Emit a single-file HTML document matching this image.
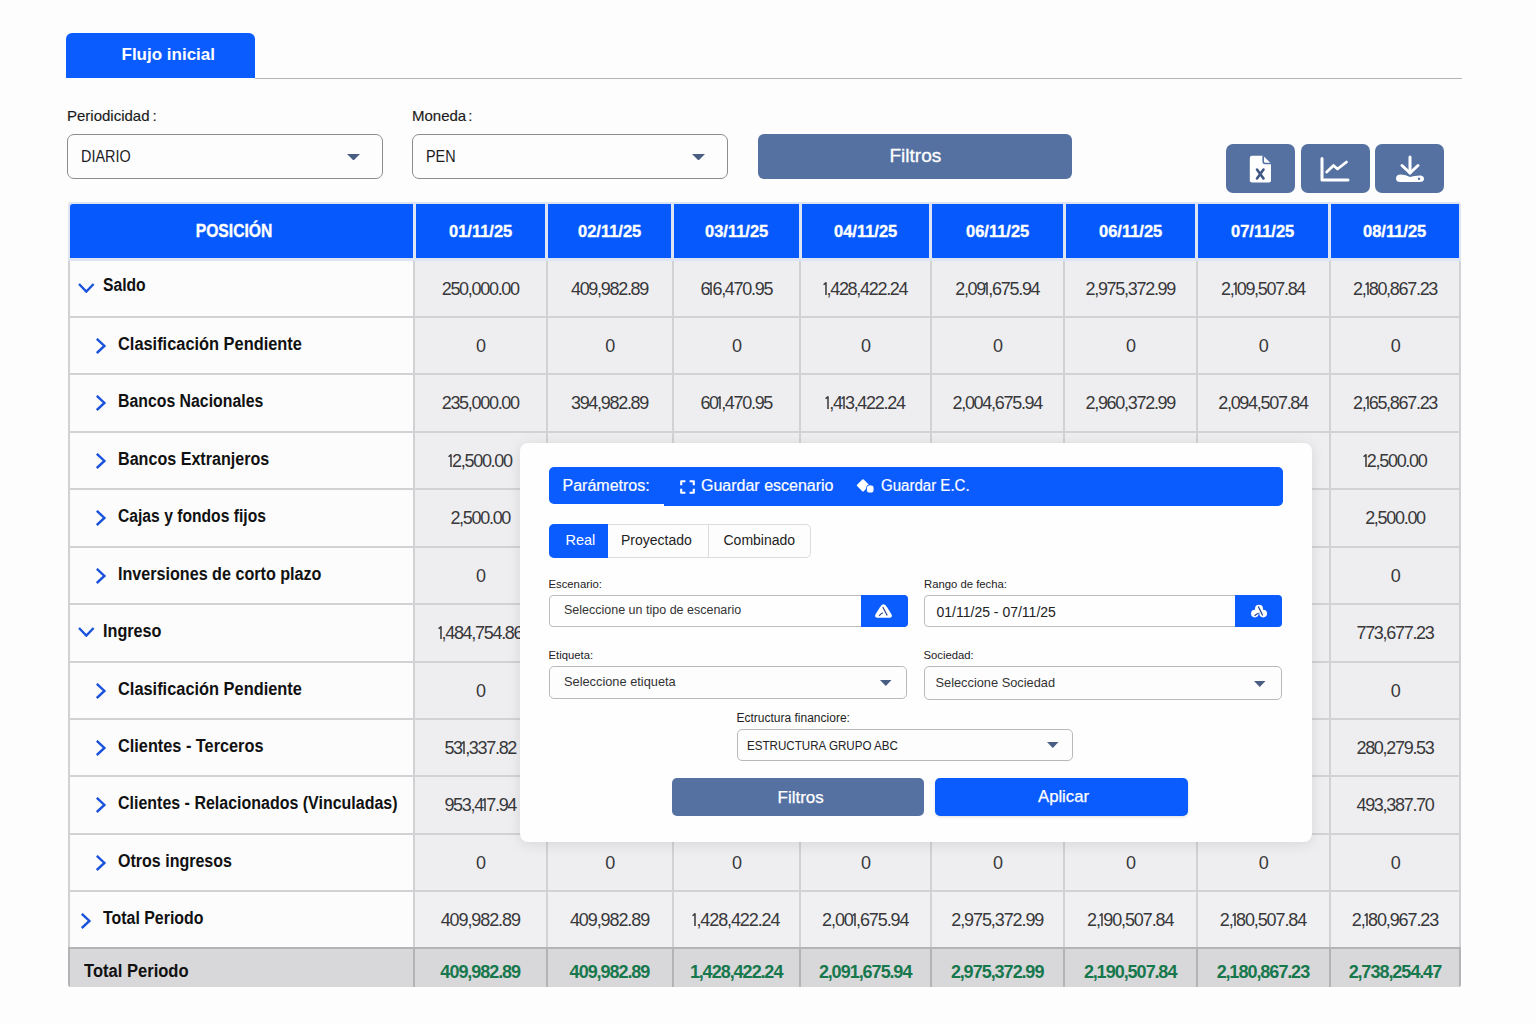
<!DOCTYPE html>
<html><head><meta charset="utf-8"><style>
*{box-sizing:border-box;margin:0;padding:0}
html,body{width:1536px;height:1024px;overflow:hidden;background:#fdfdfd;font-family:"Liberation Sans",sans-serif;color:#1c1c1e}
.a{position:absolute}
.t{position:absolute;white-space:nowrap;line-height:1}
.sx{display:inline-block;transform-origin:0 0}
.c{position:absolute;white-space:nowrap;line-height:1;text-align:center}
.c span{display:inline-block}
.n1{vertical-align:baseline;margin:0 -0.6px 0 -0.7px}
.pb{font-style:normal;margin:0 -0.3px}
</style></head><body>

<div class="a" style="left:66px;top:33px;width:189px;height:45px;background:#0b5cff;border-radius:6px 6px 0 0"></div>
<div class="t" style="left:121.5px;top:46px;font-size:17px;font-weight:700;color:#fff">Flujo inicial</div>
<div class="a" style="left:255px;top:78px;width:1207px;height:1px;background:#b4b4b6"></div>
<div class="t" style="left:67px;top:108px;font-size:15px;color:#1a1a1a;-webkit-text-stroke:0.15px #1a1a1a">Periodicidad<span style="margin-left:3px">:</span></div>
<div class="t" style="left:412px;top:108px;font-size:15px;color:#1a1a1a;-webkit-text-stroke:0.15px #1a1a1a">Moneda<span style="margin-left:2px">:</span></div>
<div class="a" style="left:67px;top:134px;width:316px;height:44.5px;border:1.5px solid #8c8c8e;border-radius:7px;background:#fdfdfe"></div>
<div class="t" style="left:81px;top:149px;font-size:16px;color:#1c1c1e"><span class='sx' style='transform:scaleX(0.9)'>DIARIO</span></div>
<svg class="a" style="left:347px;top:153.5px" width="13" height="6.5" viewBox="0 0 13 6.5"><path d="M0 0H13L6.5 6.5Z" fill="#4a5d82"/></svg>
<div class="a" style="left:412px;top:134px;width:316px;height:44.5px;border:1.5px solid #8c8c8e;border-radius:7px;background:#fdfdfe"></div>
<div class="t" style="left:425.5px;top:149px;font-size:16px;color:#1c1c1e"><span class='sx' style='transform:scaleX(0.9)'>PEN</span></div>
<svg class="a" style="left:692px;top:153.5px" width="13" height="6.5" viewBox="0 0 13 6.5"><path d="M0 0H13L6.5 6.5Z" fill="#4a5d82"/></svg>
<div class="a" style="left:758px;top:134px;width:314px;height:44.5px;background:#5571a1;border-radius:6px"></div>
<div class="t" style="left:889.5px;top:145.5px;font-size:19px;color:#fff;-webkit-text-stroke:0.3px #fff">Filtros</div>
<div class="a" style="left:1226px;top:143.5px;width:69px;height:49.5px;background:#5571a1;border-radius:7px"></div>
<div class="a" style="left:1300.5px;top:143.5px;width:69px;height:49.5px;background:#5571a1;border-radius:7px"></div>
<div class="a" style="left:1375px;top:143.5px;width:69px;height:49.5px;background:#5571a1;border-radius:7px"></div>
<svg class="a" style="left:1249px;top:155px" width="23" height="29" viewBox="0 0 23 29">
<path d="M3 0.7H14.2L22 8.5V25.5Q22 27.6 19.9 27.6H3Q0.8 27.6 0.8 25.5V2.9Q0.8 0.7 3 0.7Z" fill="#fff"/>
<path d="M14.2 0.7V6.5Q14.2 8.5 16.2 8.5H22" fill="none" stroke="#5571a1" stroke-width="1.6"/>
<path d="M8 14.5L14.5 23.5M14.5 14.5L8 23.5" stroke="#3f5784" stroke-width="2.6" stroke-linecap="round"/>
</svg>
<svg class="a" style="left:1318px;top:155px" width="34" height="28" viewBox="0 0 34 28">
<path d="M4 3.5V25H30" fill="none" stroke="#fff" stroke-width="3" stroke-linecap="round" stroke-linejoin="round"/>
<path d="M8.7 17L15.5 10.5L19.5 14L28.5 7" fill="none" stroke="#fff" stroke-width="2.8" stroke-linecap="round" stroke-linejoin="round"/>
</svg>
<svg class="a" style="left:1394px;top:154px" width="32" height="30" viewBox="0 0 32 30">
<path d="M16 3V19" stroke="#fff" stroke-width="3" stroke-linecap="round"/>
<path d="M8 11.5L16 19L24 11.5" fill="none" stroke="#fff" stroke-width="3" stroke-linecap="round" stroke-linejoin="round"/>
<path d="M7 20.5Q2 20.5 2 24.5Q2 28 6.5 28H25.5Q30 28 30 25Q30 21.8 26 21.5Q20 21.5 16 23Q12 20.5 7 20.5Z" fill="#fff"/>
<circle cx="25" cy="24.8" r="1.2" fill="#5571a1"/>
</svg>
<div class="a" style="left:67.5px;top:202px;width:1393.0px;height:784.5px;background:#d2d2d5;overflow:hidden;border-radius:4px 4px 3px 3px">
<div class="a" style="left:0.5px;top:0px;width:1392.5px;height:58.5px;background:#dde4f3;"></div>
<div class="a" style="left:2.0px;top:2px;width:343.0px;height:54.19999999999999px;background:#0659fc;border-radius:3px 0 0 0"></div>
<div class="a" style="left:348.0px;top:2px;width:129.5px;height:54.19999999999999px;background:#0659fc;"></div>
<div class="a" style="left:480.5px;top:2px;width:123.0px;height:54.19999999999999px;background:#0659fc;"></div>
<div class="a" style="left:606.5px;top:2px;width:124.5px;height:54.19999999999999px;background:#0659fc;"></div>
<div class="a" style="left:734.0px;top:2px;width:127.5px;height:54.19999999999999px;background:#0659fc;"></div>
<div class="a" style="left:864.5px;top:2px;width:130.5px;height:54.19999999999999px;background:#0659fc;"></div>
<div class="a" style="left:998.0px;top:2px;width:129.5px;height:54.19999999999999px;background:#0659fc;"></div>
<div class="a" style="left:1130.5px;top:2px;width:130.0px;height:54.19999999999999px;background:#0659fc;"></div>
<div class="a" style="left:1263.5px;top:2px;width:127.5px;height:54.19999999999999px;background:#0659fc;"></div>
<div class="a" style="left:2.0px;top:58.5px;width:343.5px;height:55.5px;background:#fcfcfd;"></div>
<div class="a" style="left:347.5px;top:58.5px;width:130.5px;height:55.5px;background:#eeeef0;"></div>
<div class="a" style="left:480.0px;top:58.5px;width:124.0px;height:55.5px;background:#eeeef0;"></div>
<div class="a" style="left:606.0px;top:58.5px;width:125.5px;height:55.5px;background:#eeeef0;"></div>
<div class="a" style="left:733.5px;top:58.5px;width:128.5px;height:55.5px;background:#eeeef0;"></div>
<div class="a" style="left:864.0px;top:58.5px;width:131.5px;height:55.5px;background:#eeeef0;"></div>
<div class="a" style="left:997.5px;top:58.5px;width:130.5px;height:55.5px;background:#eeeef0;"></div>
<div class="a" style="left:1130.0px;top:58.5px;width:131.0px;height:55.5px;background:#eeeef0;"></div>
<div class="a" style="left:1263.0px;top:58.5px;width:128.5px;height:55.5px;background:#eeeef0;"></div>
<div class="a" style="left:2.0px;top:116px;width:343.5px;height:55px;background:#fcfcfd;"></div>
<div class="a" style="left:347.5px;top:116px;width:130.5px;height:55px;background:#eeeef0;"></div>
<div class="a" style="left:480.0px;top:116px;width:124.0px;height:55px;background:#eeeef0;"></div>
<div class="a" style="left:606.0px;top:116px;width:125.5px;height:55px;background:#eeeef0;"></div>
<div class="a" style="left:733.5px;top:116px;width:128.5px;height:55px;background:#eeeef0;"></div>
<div class="a" style="left:864.0px;top:116px;width:131.5px;height:55px;background:#eeeef0;"></div>
<div class="a" style="left:997.5px;top:116px;width:130.5px;height:55px;background:#eeeef0;"></div>
<div class="a" style="left:1130.0px;top:116px;width:131.0px;height:55px;background:#eeeef0;"></div>
<div class="a" style="left:1263.0px;top:116px;width:128.5px;height:55px;background:#eeeef0;"></div>
<div class="a" style="left:2.0px;top:173px;width:343.5px;height:56px;background:#fcfcfd;"></div>
<div class="a" style="left:347.5px;top:173px;width:130.5px;height:56px;background:#eeeef0;"></div>
<div class="a" style="left:480.0px;top:173px;width:124.0px;height:56px;background:#eeeef0;"></div>
<div class="a" style="left:606.0px;top:173px;width:125.5px;height:56px;background:#eeeef0;"></div>
<div class="a" style="left:733.5px;top:173px;width:128.5px;height:56px;background:#eeeef0;"></div>
<div class="a" style="left:864.0px;top:173px;width:131.5px;height:56px;background:#eeeef0;"></div>
<div class="a" style="left:997.5px;top:173px;width:130.5px;height:56px;background:#eeeef0;"></div>
<div class="a" style="left:1130.0px;top:173px;width:131.0px;height:56px;background:#eeeef0;"></div>
<div class="a" style="left:1263.0px;top:173px;width:128.5px;height:56px;background:#eeeef0;"></div>
<div class="a" style="left:2.0px;top:231px;width:343.5px;height:55px;background:#fcfcfd;"></div>
<div class="a" style="left:347.5px;top:231px;width:130.5px;height:55px;background:#eeeef0;"></div>
<div class="a" style="left:480.0px;top:231px;width:124.0px;height:55px;background:#eeeef0;"></div>
<div class="a" style="left:606.0px;top:231px;width:125.5px;height:55px;background:#eeeef0;"></div>
<div class="a" style="left:733.5px;top:231px;width:128.5px;height:55px;background:#eeeef0;"></div>
<div class="a" style="left:864.0px;top:231px;width:131.5px;height:55px;background:#eeeef0;"></div>
<div class="a" style="left:997.5px;top:231px;width:130.5px;height:55px;background:#eeeef0;"></div>
<div class="a" style="left:1130.0px;top:231px;width:131.0px;height:55px;background:#eeeef0;"></div>
<div class="a" style="left:1263.0px;top:231px;width:128.5px;height:55px;background:#eeeef0;"></div>
<div class="a" style="left:2.0px;top:288px;width:343.5px;height:56px;background:#fcfcfd;"></div>
<div class="a" style="left:347.5px;top:288px;width:130.5px;height:56px;background:#eeeef0;"></div>
<div class="a" style="left:480.0px;top:288px;width:124.0px;height:56px;background:#eeeef0;"></div>
<div class="a" style="left:606.0px;top:288px;width:125.5px;height:56px;background:#eeeef0;"></div>
<div class="a" style="left:733.5px;top:288px;width:128.5px;height:56px;background:#eeeef0;"></div>
<div class="a" style="left:864.0px;top:288px;width:131.5px;height:56px;background:#eeeef0;"></div>
<div class="a" style="left:997.5px;top:288px;width:130.5px;height:56px;background:#eeeef0;"></div>
<div class="a" style="left:1130.0px;top:288px;width:131.0px;height:56px;background:#eeeef0;"></div>
<div class="a" style="left:1263.0px;top:288px;width:128.5px;height:56px;background:#eeeef0;"></div>
<div class="a" style="left:2.0px;top:346px;width:343.5px;height:55px;background:#fcfcfd;"></div>
<div class="a" style="left:347.5px;top:346px;width:130.5px;height:55px;background:#eeeef0;"></div>
<div class="a" style="left:480.0px;top:346px;width:124.0px;height:55px;background:#eeeef0;"></div>
<div class="a" style="left:606.0px;top:346px;width:125.5px;height:55px;background:#eeeef0;"></div>
<div class="a" style="left:733.5px;top:346px;width:128.5px;height:55px;background:#eeeef0;"></div>
<div class="a" style="left:864.0px;top:346px;width:131.5px;height:55px;background:#eeeef0;"></div>
<div class="a" style="left:997.5px;top:346px;width:130.5px;height:55px;background:#eeeef0;"></div>
<div class="a" style="left:1130.0px;top:346px;width:131.0px;height:55px;background:#eeeef0;"></div>
<div class="a" style="left:1263.0px;top:346px;width:128.5px;height:55px;background:#eeeef0;"></div>
<div class="a" style="left:2.0px;top:403px;width:343.5px;height:56px;background:#fcfcfd;"></div>
<div class="a" style="left:347.5px;top:403px;width:130.5px;height:56px;background:#eeeef0;"></div>
<div class="a" style="left:480.0px;top:403px;width:124.0px;height:56px;background:#eeeef0;"></div>
<div class="a" style="left:606.0px;top:403px;width:125.5px;height:56px;background:#eeeef0;"></div>
<div class="a" style="left:733.5px;top:403px;width:128.5px;height:56px;background:#eeeef0;"></div>
<div class="a" style="left:864.0px;top:403px;width:131.5px;height:56px;background:#eeeef0;"></div>
<div class="a" style="left:997.5px;top:403px;width:130.5px;height:56px;background:#eeeef0;"></div>
<div class="a" style="left:1130.0px;top:403px;width:131.0px;height:56px;background:#eeeef0;"></div>
<div class="a" style="left:1263.0px;top:403px;width:128.5px;height:56px;background:#eeeef0;"></div>
<div class="a" style="left:2.0px;top:461px;width:343.5px;height:55px;background:#fcfcfd;"></div>
<div class="a" style="left:347.5px;top:461px;width:130.5px;height:55px;background:#eeeef0;"></div>
<div class="a" style="left:480.0px;top:461px;width:124.0px;height:55px;background:#eeeef0;"></div>
<div class="a" style="left:606.0px;top:461px;width:125.5px;height:55px;background:#eeeef0;"></div>
<div class="a" style="left:733.5px;top:461px;width:128.5px;height:55px;background:#eeeef0;"></div>
<div class="a" style="left:864.0px;top:461px;width:131.5px;height:55px;background:#eeeef0;"></div>
<div class="a" style="left:997.5px;top:461px;width:130.5px;height:55px;background:#eeeef0;"></div>
<div class="a" style="left:1130.0px;top:461px;width:131.0px;height:55px;background:#eeeef0;"></div>
<div class="a" style="left:1263.0px;top:461px;width:128.5px;height:55px;background:#eeeef0;"></div>
<div class="a" style="left:2.0px;top:518px;width:343.5px;height:55px;background:#fcfcfd;"></div>
<div class="a" style="left:347.5px;top:518px;width:130.5px;height:55px;background:#eeeef0;"></div>
<div class="a" style="left:480.0px;top:518px;width:124.0px;height:55px;background:#eeeef0;"></div>
<div class="a" style="left:606.0px;top:518px;width:125.5px;height:55px;background:#eeeef0;"></div>
<div class="a" style="left:733.5px;top:518px;width:128.5px;height:55px;background:#eeeef0;"></div>
<div class="a" style="left:864.0px;top:518px;width:131.5px;height:55px;background:#eeeef0;"></div>
<div class="a" style="left:997.5px;top:518px;width:130.5px;height:55px;background:#eeeef0;"></div>
<div class="a" style="left:1130.0px;top:518px;width:131.0px;height:55px;background:#eeeef0;"></div>
<div class="a" style="left:1263.0px;top:518px;width:128.5px;height:55px;background:#eeeef0;"></div>
<div class="a" style="left:2.0px;top:575px;width:343.5px;height:56px;background:#fcfcfd;"></div>
<div class="a" style="left:347.5px;top:575px;width:130.5px;height:56px;background:#eeeef0;"></div>
<div class="a" style="left:480.0px;top:575px;width:124.0px;height:56px;background:#eeeef0;"></div>
<div class="a" style="left:606.0px;top:575px;width:125.5px;height:56px;background:#eeeef0;"></div>
<div class="a" style="left:733.5px;top:575px;width:128.5px;height:56px;background:#eeeef0;"></div>
<div class="a" style="left:864.0px;top:575px;width:131.5px;height:56px;background:#eeeef0;"></div>
<div class="a" style="left:997.5px;top:575px;width:130.5px;height:56px;background:#eeeef0;"></div>
<div class="a" style="left:1130.0px;top:575px;width:131.0px;height:56px;background:#eeeef0;"></div>
<div class="a" style="left:1263.0px;top:575px;width:128.5px;height:56px;background:#eeeef0;"></div>
<div class="a" style="left:2.0px;top:633px;width:343.5px;height:55px;background:#fcfcfd;"></div>
<div class="a" style="left:347.5px;top:633px;width:130.5px;height:55px;background:#eeeef0;"></div>
<div class="a" style="left:480.0px;top:633px;width:124.0px;height:55px;background:#eeeef0;"></div>
<div class="a" style="left:606.0px;top:633px;width:125.5px;height:55px;background:#eeeef0;"></div>
<div class="a" style="left:733.5px;top:633px;width:128.5px;height:55px;background:#eeeef0;"></div>
<div class="a" style="left:864.0px;top:633px;width:131.5px;height:55px;background:#eeeef0;"></div>
<div class="a" style="left:997.5px;top:633px;width:130.5px;height:55px;background:#eeeef0;"></div>
<div class="a" style="left:1130.0px;top:633px;width:131.0px;height:55px;background:#eeeef0;"></div>
<div class="a" style="left:1263.0px;top:633px;width:128.5px;height:55px;background:#eeeef0;"></div>
<div class="a" style="left:2.0px;top:690px;width:343.5px;height:55px;background:#fcfcfd;"></div>
<div class="a" style="left:347.5px;top:690px;width:130.5px;height:55px;background:#f0f0f2;"></div>
<div class="a" style="left:480.0px;top:690px;width:124.0px;height:55px;background:#f0f0f2;"></div>
<div class="a" style="left:606.0px;top:690px;width:125.5px;height:55px;background:#f0f0f2;"></div>
<div class="a" style="left:733.5px;top:690px;width:128.5px;height:55px;background:#f0f0f2;"></div>
<div class="a" style="left:864.0px;top:690px;width:131.5px;height:55px;background:#f0f0f2;"></div>
<div class="a" style="left:997.5px;top:690px;width:130.5px;height:55px;background:#f0f0f2;"></div>
<div class="a" style="left:1130.0px;top:690px;width:131.0px;height:55px;background:#f0f0f2;"></div>
<div class="a" style="left:1263.0px;top:690px;width:128.5px;height:55px;background:#f0f0f2;"></div>
<div class="a" style="left:0.5px;top:745px;width:1392.5px;height:44.5px;background:#b4b4b7;"></div>
<div class="a" style="left:2.0px;top:747.2px;width:343.5px;height:42.299999999999955px;background:#d8d7d9;"></div>
<div class="a" style="left:347.5px;top:747.2px;width:130.5px;height:42.299999999999955px;background:#d8d7d9;"></div>
<div class="a" style="left:480.0px;top:747.2px;width:124.0px;height:42.299999999999955px;background:#d8d7d9;"></div>
<div class="a" style="left:606.0px;top:747.2px;width:125.5px;height:42.299999999999955px;background:#d8d7d9;"></div>
<div class="a" style="left:733.5px;top:747.2px;width:128.5px;height:42.299999999999955px;background:#d8d7d9;"></div>
<div class="a" style="left:864.0px;top:747.2px;width:131.5px;height:42.299999999999955px;background:#d8d7d9;"></div>
<div class="a" style="left:997.5px;top:747.2px;width:130.5px;height:42.299999999999955px;background:#d8d7d9;"></div>
<div class="a" style="left:1130.0px;top:747.2px;width:131.0px;height:42.299999999999955px;background:#d8d7d9;"></div>
<div class="a" style="left:1263.0px;top:747.2px;width:128.0px;height:42.299999999999955px;background:#d8d7d9;"></div>
</div>
<div class="c" style="left:61px;width:346px;top:222px;font-size:18px;font-weight:700;color:#fff;-webkit-text-stroke:0.35px #fff"><span style="transform:scaleX(0.87)">POSICIÓN</span></div>
<div class="c" style="left:414px;width:132.5px;top:223px;font-size:17px;font-weight:700;color:#fff;-webkit-text-stroke:0.35px #fff"><span style="transform:scaleX(0.97)">01/11/25</span></div>
<div class="c" style="left:546.5px;width:126.0px;top:223px;font-size:17px;font-weight:700;color:#fff;-webkit-text-stroke:0.35px #fff"><span style="transform:scaleX(0.97)">02/11/25</span></div>
<div class="c" style="left:672.5px;width:127.5px;top:223px;font-size:17px;font-weight:700;color:#fff;-webkit-text-stroke:0.35px #fff"><span style="transform:scaleX(0.97)">03/11/25</span></div>
<div class="c" style="left:800px;width:130.5px;top:223px;font-size:17px;font-weight:700;color:#fff;-webkit-text-stroke:0.35px #fff"><span style="transform:scaleX(0.97)">04/11/25</span></div>
<div class="c" style="left:930.5px;width:133.5px;top:223px;font-size:17px;font-weight:700;color:#fff;-webkit-text-stroke:0.35px #fff"><span style="transform:scaleX(0.97)">06/11/25</span></div>
<div class="c" style="left:1064px;width:132.5px;top:223px;font-size:17px;font-weight:700;color:#fff;-webkit-text-stroke:0.35px #fff"><span style="transform:scaleX(0.97)">06/11/25</span></div>
<div class="c" style="left:1196.5px;width:133.0px;top:223px;font-size:17px;font-weight:700;color:#fff;-webkit-text-stroke:0.35px #fff"><span style="transform:scaleX(0.97)">07/11/25</span></div>
<div class="c" style="left:1329.5px;width:131.0px;top:223px;font-size:17px;font-weight:700;color:#fff;-webkit-text-stroke:0.35px #fff"><span style="transform:scaleX(0.97)">08/11/25</span></div>
<svg class="a" style="left:77.8px;top:282.8px" width="17" height="10.5" viewBox="0 0 17 10.5"><path d="M1 1L8.3 8.6L15.6 1" fill="none" stroke="#1b52dc" stroke-width="2.4" stroke-linecap="butt" stroke-linejoin="miter"/></svg>
<div class="t" style="left:102.6px;top:276.3px;font-size:18px;font-weight:700;color:#111"><span class="sx" style="transform:scaleX(0.87)">Saldo</span></div>
<div class="c" style="left:414px;width:132.5px;top:280.1px;font-size:18px;color:#38383b;letter-spacing:-1.3px"><span>250,000.00</span></div>
<div class="c" style="left:546.5px;width:126.0px;top:280.1px;font-size:18px;color:#38383b;letter-spacing:-1.3px"><span>409,982.89</span></div>
<div class="c" style="left:672.5px;width:127.5px;top:280.1px;font-size:18px;color:#38383b;letter-spacing:-1.3px"><span>6<svg class="n1" width="4.6" height="13" viewBox="0 0 4.6 13"><path d="M3 0.3V13M3.2 0.5L0.6 2.7" fill="none" stroke="#38383b" stroke-width="1.5"/></svg>6,470.95</span></div>
<div class="c" style="left:800px;width:130.5px;top:280.1px;font-size:18px;color:#38383b;letter-spacing:-1.3px"><span><svg class="n1" width="4.6" height="13" viewBox="0 0 4.6 13"><path d="M3 0.3V13M3.2 0.5L0.6 2.7" fill="none" stroke="#38383b" stroke-width="1.5"/></svg>,428,422.24</span></div>
<div class="c" style="left:930.5px;width:133.5px;top:280.1px;font-size:18px;color:#38383b;letter-spacing:-1.3px"><span>2,09<svg class="n1" width="4.6" height="13" viewBox="0 0 4.6 13"><path d="M3 0.3V13M3.2 0.5L0.6 2.7" fill="none" stroke="#38383b" stroke-width="1.5"/></svg>,675.94</span></div>
<div class="c" style="left:1064px;width:132.5px;top:280.1px;font-size:18px;color:#38383b;letter-spacing:-1.3px"><span>2,975,372.99</span></div>
<div class="c" style="left:1196.5px;width:133.0px;top:280.1px;font-size:18px;color:#38383b;letter-spacing:-1.3px"><span>2,<svg class="n1" width="4.6" height="13" viewBox="0 0 4.6 13"><path d="M3 0.3V13M3.2 0.5L0.6 2.7" fill="none" stroke="#38383b" stroke-width="1.5"/></svg>09,507.84</span></div>
<div class="c" style="left:1329.5px;width:131.0px;top:280.1px;font-size:18px;color:#38383b;letter-spacing:-1.3px"><span>2,<svg class="n1" width="4.6" height="13" viewBox="0 0 4.6 13"><path d="M3 0.3V13M3.2 0.5L0.6 2.7" fill="none" stroke="#38383b" stroke-width="1.5"/></svg>80,867.23</span></div>
<svg class="a" style="left:96.3px;top:338px" width="11" height="16" viewBox="0 0 11 16"><path d="M0.8 0.8L8.4 7.9L0.8 15" fill="none" stroke="#1b52dc" stroke-width="2.4" stroke-linecap="butt" stroke-linejoin="miter"/></svg>
<div class="t" style="left:117.7px;top:334.8px;font-size:18px;font-weight:700;color:#111"><span class="sx" style="transform:scaleX(0.91)">Clasificación Pendiente</span></div>
<div class="c" style="left:414px;width:132.5px;top:337.1px;font-size:18px;color:#38383b;letter-spacing:-1.3px"><span>0</span></div>
<div class="c" style="left:546.5px;width:126.0px;top:337.1px;font-size:18px;color:#38383b;letter-spacing:-1.3px"><span>0</span></div>
<div class="c" style="left:672.5px;width:127.5px;top:337.1px;font-size:18px;color:#38383b;letter-spacing:-1.3px"><span>0</span></div>
<div class="c" style="left:800px;width:130.5px;top:337.1px;font-size:18px;color:#38383b;letter-spacing:-1.3px"><span>0</span></div>
<div class="c" style="left:930.5px;width:133.5px;top:337.1px;font-size:18px;color:#38383b;letter-spacing:-1.3px"><span>0</span></div>
<div class="c" style="left:1064px;width:132.5px;top:337.1px;font-size:18px;color:#38383b;letter-spacing:-1.3px"><span>0</span></div>
<div class="c" style="left:1196.5px;width:133.0px;top:337.1px;font-size:18px;color:#38383b;letter-spacing:-1.3px"><span>0</span></div>
<div class="c" style="left:1329.5px;width:131.0px;top:337.1px;font-size:18px;color:#38383b;letter-spacing:-1.3px"><span>0</span></div>
<svg class="a" style="left:96.3px;top:395px" width="11" height="16" viewBox="0 0 11 16"><path d="M0.8 0.8L8.4 7.9L0.8 15" fill="none" stroke="#1b52dc" stroke-width="2.4" stroke-linecap="butt" stroke-linejoin="miter"/></svg>
<div class="t" style="left:117.7px;top:391.8px;font-size:18px;font-weight:700;color:#111"><span class="sx" style="transform:scaleX(0.88)">Bancos Nacionales</span></div>
<div class="c" style="left:414px;width:132.5px;top:394.1px;font-size:18px;color:#38383b;letter-spacing:-1.3px"><span>235,000.00</span></div>
<div class="c" style="left:546.5px;width:126.0px;top:394.1px;font-size:18px;color:#38383b;letter-spacing:-1.3px"><span>394,982.89</span></div>
<div class="c" style="left:672.5px;width:127.5px;top:394.1px;font-size:18px;color:#38383b;letter-spacing:-1.3px"><span>60<svg class="n1" width="4.6" height="13" viewBox="0 0 4.6 13"><path d="M3 0.3V13M3.2 0.5L0.6 2.7" fill="none" stroke="#38383b" stroke-width="1.5"/></svg>,470.95</span></div>
<div class="c" style="left:800px;width:130.5px;top:394.1px;font-size:18px;color:#38383b;letter-spacing:-1.3px"><span><svg class="n1" width="4.6" height="13" viewBox="0 0 4.6 13"><path d="M3 0.3V13M3.2 0.5L0.6 2.7" fill="none" stroke="#38383b" stroke-width="1.5"/></svg>,4<svg class="n1" width="4.6" height="13" viewBox="0 0 4.6 13"><path d="M3 0.3V13M3.2 0.5L0.6 2.7" fill="none" stroke="#38383b" stroke-width="1.5"/></svg>3,422.24</span></div>
<div class="c" style="left:930.5px;width:133.5px;top:394.1px;font-size:18px;color:#38383b;letter-spacing:-1.3px"><span>2,004,675.94</span></div>
<div class="c" style="left:1064px;width:132.5px;top:394.1px;font-size:18px;color:#38383b;letter-spacing:-1.3px"><span>2,960,372.99</span></div>
<div class="c" style="left:1196.5px;width:133.0px;top:394.1px;font-size:18px;color:#38383b;letter-spacing:-1.3px"><span>2,094,507.84</span></div>
<div class="c" style="left:1329.5px;width:131.0px;top:394.1px;font-size:18px;color:#38383b;letter-spacing:-1.3px"><span>2,<svg class="n1" width="4.6" height="13" viewBox="0 0 4.6 13"><path d="M3 0.3V13M3.2 0.5L0.6 2.7" fill="none" stroke="#38383b" stroke-width="1.5"/></svg>65,867.23</span></div>
<svg class="a" style="left:96.3px;top:453px" width="11" height="16" viewBox="0 0 11 16"><path d="M0.8 0.8L8.4 7.9L0.8 15" fill="none" stroke="#1b52dc" stroke-width="2.4" stroke-linecap="butt" stroke-linejoin="miter"/></svg>
<div class="t" style="left:117.7px;top:449.8px;font-size:18px;font-weight:700;color:#111"><span class="sx" style="transform:scaleX(0.895)">Bancos Extranjeros</span></div>
<div class="c" style="left:414px;width:132.5px;top:452.1px;font-size:18px;color:#38383b;letter-spacing:-1.3px"><span><svg class="n1" width="4.6" height="13" viewBox="0 0 4.6 13"><path d="M3 0.3V13M3.2 0.5L0.6 2.7" fill="none" stroke="#38383b" stroke-width="1.5"/></svg>2,500.00</span></div>
<div class="c" style="left:546.5px;width:126.0px;top:452.1px;font-size:18px;color:#38383b;letter-spacing:-1.3px"><span><svg class="n1" width="4.6" height="13" viewBox="0 0 4.6 13"><path d="M3 0.3V13M3.2 0.5L0.6 2.7" fill="none" stroke="#38383b" stroke-width="1.5"/></svg>2,500.00</span></div>
<div class="c" style="left:672.5px;width:127.5px;top:452.1px;font-size:18px;color:#38383b;letter-spacing:-1.3px"><span><svg class="n1" width="4.6" height="13" viewBox="0 0 4.6 13"><path d="M3 0.3V13M3.2 0.5L0.6 2.7" fill="none" stroke="#38383b" stroke-width="1.5"/></svg>2,500.00</span></div>
<div class="c" style="left:800px;width:130.5px;top:452.1px;font-size:18px;color:#38383b;letter-spacing:-1.3px"><span><svg class="n1" width="4.6" height="13" viewBox="0 0 4.6 13"><path d="M3 0.3V13M3.2 0.5L0.6 2.7" fill="none" stroke="#38383b" stroke-width="1.5"/></svg>2,500.00</span></div>
<div class="c" style="left:930.5px;width:133.5px;top:452.1px;font-size:18px;color:#38383b;letter-spacing:-1.3px"><span><svg class="n1" width="4.6" height="13" viewBox="0 0 4.6 13"><path d="M3 0.3V13M3.2 0.5L0.6 2.7" fill="none" stroke="#38383b" stroke-width="1.5"/></svg>2,500.00</span></div>
<div class="c" style="left:1064px;width:132.5px;top:452.1px;font-size:18px;color:#38383b;letter-spacing:-1.3px"><span><svg class="n1" width="4.6" height="13" viewBox="0 0 4.6 13"><path d="M3 0.3V13M3.2 0.5L0.6 2.7" fill="none" stroke="#38383b" stroke-width="1.5"/></svg>2,500.00</span></div>
<div class="c" style="left:1196.5px;width:133.0px;top:452.1px;font-size:18px;color:#38383b;letter-spacing:-1.3px"><span><svg class="n1" width="4.6" height="13" viewBox="0 0 4.6 13"><path d="M3 0.3V13M3.2 0.5L0.6 2.7" fill="none" stroke="#38383b" stroke-width="1.5"/></svg>2,500.00</span></div>
<div class="c" style="left:1329.5px;width:131.0px;top:452.1px;font-size:18px;color:#38383b;letter-spacing:-1.3px"><span><svg class="n1" width="4.6" height="13" viewBox="0 0 4.6 13"><path d="M3 0.3V13M3.2 0.5L0.6 2.7" fill="none" stroke="#38383b" stroke-width="1.5"/></svg>2,500.00</span></div>
<svg class="a" style="left:96.3px;top:510px" width="11" height="16" viewBox="0 0 11 16"><path d="M0.8 0.8L8.4 7.9L0.8 15" fill="none" stroke="#1b52dc" stroke-width="2.4" stroke-linecap="butt" stroke-linejoin="miter"/></svg>
<div class="t" style="left:117.7px;top:506.8px;font-size:18px;font-weight:700;color:#111"><span class="sx" style="transform:scaleX(0.87)">Cajas y fondos fijos</span></div>
<div class="c" style="left:414px;width:132.5px;top:509.1px;font-size:18px;color:#38383b;letter-spacing:-1.3px"><span>2,500.00</span></div>
<div class="c" style="left:546.5px;width:126.0px;top:509.1px;font-size:18px;color:#38383b;letter-spacing:-1.3px"><span>2,500.00</span></div>
<div class="c" style="left:672.5px;width:127.5px;top:509.1px;font-size:18px;color:#38383b;letter-spacing:-1.3px"><span>2,500.00</span></div>
<div class="c" style="left:800px;width:130.5px;top:509.1px;font-size:18px;color:#38383b;letter-spacing:-1.3px"><span>2,500.00</span></div>
<div class="c" style="left:930.5px;width:133.5px;top:509.1px;font-size:18px;color:#38383b;letter-spacing:-1.3px"><span>2,500.00</span></div>
<div class="c" style="left:1064px;width:132.5px;top:509.1px;font-size:18px;color:#38383b;letter-spacing:-1.3px"><span>2,500.00</span></div>
<div class="c" style="left:1196.5px;width:133.0px;top:509.1px;font-size:18px;color:#38383b;letter-spacing:-1.3px"><span>2,500.00</span></div>
<div class="c" style="left:1329.5px;width:131.0px;top:509.1px;font-size:18px;color:#38383b;letter-spacing:-1.3px"><span>2,500.00</span></div>
<svg class="a" style="left:96.3px;top:568px" width="11" height="16" viewBox="0 0 11 16"><path d="M0.8 0.8L8.4 7.9L0.8 15" fill="none" stroke="#1b52dc" stroke-width="2.4" stroke-linecap="butt" stroke-linejoin="miter"/></svg>
<div class="t" style="left:117.7px;top:564.8px;font-size:18px;font-weight:700;color:#111"><span class="sx" style="transform:scaleX(0.896)">Inversiones de corto plazo</span></div>
<div class="c" style="left:414px;width:132.5px;top:567.1px;font-size:18px;color:#38383b;letter-spacing:-1.3px"><span>0</span></div>
<div class="c" style="left:546.5px;width:126.0px;top:567.1px;font-size:18px;color:#38383b;letter-spacing:-1.3px"><span>0</span></div>
<div class="c" style="left:672.5px;width:127.5px;top:567.1px;font-size:18px;color:#38383b;letter-spacing:-1.3px"><span>0</span></div>
<div class="c" style="left:800px;width:130.5px;top:567.1px;font-size:18px;color:#38383b;letter-spacing:-1.3px"><span>0</span></div>
<div class="c" style="left:930.5px;width:133.5px;top:567.1px;font-size:18px;color:#38383b;letter-spacing:-1.3px"><span>0</span></div>
<div class="c" style="left:1064px;width:132.5px;top:567.1px;font-size:18px;color:#38383b;letter-spacing:-1.3px"><span>0</span></div>
<div class="c" style="left:1196.5px;width:133.0px;top:567.1px;font-size:18px;color:#38383b;letter-spacing:-1.3px"><span>0</span></div>
<div class="c" style="left:1329.5px;width:131.0px;top:567.1px;font-size:18px;color:#38383b;letter-spacing:-1.3px"><span>0</span></div>
<svg class="a" style="left:77.8px;top:626.8px" width="17" height="10.5" viewBox="0 0 17 10.5"><path d="M1 1L8.3 8.6L15.6 1" fill="none" stroke="#1b52dc" stroke-width="2.4" stroke-linecap="butt" stroke-linejoin="miter"/></svg>
<div class="t" style="left:102.6px;top:621.8px;font-size:18px;font-weight:700;color:#111"><span class="sx" style="transform:scaleX(0.9)">Ingreso</span></div>
<div class="c" style="left:414px;width:132.5px;top:624.1px;font-size:18px;color:#38383b;letter-spacing:-1.3px"><span><svg class="n1" width="4.6" height="13" viewBox="0 0 4.6 13"><path d="M3 0.3V13M3.2 0.5L0.6 2.7" fill="none" stroke="#38383b" stroke-width="1.5"/></svg>,484,754.86</span></div>
<div class="c" style="left:546.5px;width:126.0px;top:624.1px;font-size:18px;color:#38383b;letter-spacing:-1.3px"><span>0</span></div>
<div class="c" style="left:672.5px;width:127.5px;top:624.1px;font-size:18px;color:#38383b;letter-spacing:-1.3px"><span>0</span></div>
<div class="c" style="left:800px;width:130.5px;top:624.1px;font-size:18px;color:#38383b;letter-spacing:-1.3px"><span>0</span></div>
<div class="c" style="left:930.5px;width:133.5px;top:624.1px;font-size:18px;color:#38383b;letter-spacing:-1.3px"><span>0</span></div>
<div class="c" style="left:1064px;width:132.5px;top:624.1px;font-size:18px;color:#38383b;letter-spacing:-1.3px"><span>0</span></div>
<div class="c" style="left:1196.5px;width:133.0px;top:624.1px;font-size:18px;color:#38383b;letter-spacing:-1.3px"><span>0</span></div>
<div class="c" style="left:1329.5px;width:131.0px;top:624.1px;font-size:18px;color:#38383b;letter-spacing:-1.3px"><span>773,677.23</span></div>
<svg class="a" style="left:96.3px;top:683px" width="11" height="16" viewBox="0 0 11 16"><path d="M0.8 0.8L8.4 7.9L0.8 15" fill="none" stroke="#1b52dc" stroke-width="2.4" stroke-linecap="butt" stroke-linejoin="miter"/></svg>
<div class="t" style="left:117.7px;top:679.8px;font-size:18px;font-weight:700;color:#111"><span class="sx" style="transform:scaleX(0.91)">Clasificación Pendiente</span></div>
<div class="c" style="left:414px;width:132.5px;top:682.1px;font-size:18px;color:#38383b;letter-spacing:-1.3px"><span>0</span></div>
<div class="c" style="left:546.5px;width:126.0px;top:682.1px;font-size:18px;color:#38383b;letter-spacing:-1.3px"><span>0</span></div>
<div class="c" style="left:672.5px;width:127.5px;top:682.1px;font-size:18px;color:#38383b;letter-spacing:-1.3px"><span>0</span></div>
<div class="c" style="left:800px;width:130.5px;top:682.1px;font-size:18px;color:#38383b;letter-spacing:-1.3px"><span>0</span></div>
<div class="c" style="left:930.5px;width:133.5px;top:682.1px;font-size:18px;color:#38383b;letter-spacing:-1.3px"><span>0</span></div>
<div class="c" style="left:1064px;width:132.5px;top:682.1px;font-size:18px;color:#38383b;letter-spacing:-1.3px"><span>0</span></div>
<div class="c" style="left:1196.5px;width:133.0px;top:682.1px;font-size:18px;color:#38383b;letter-spacing:-1.3px"><span>0</span></div>
<div class="c" style="left:1329.5px;width:131.0px;top:682.1px;font-size:18px;color:#38383b;letter-spacing:-1.3px"><span>0</span></div>
<svg class="a" style="left:96.3px;top:740px" width="11" height="16" viewBox="0 0 11 16"><path d="M0.8 0.8L8.4 7.9L0.8 15" fill="none" stroke="#1b52dc" stroke-width="2.4" stroke-linecap="butt" stroke-linejoin="miter"/></svg>
<div class="t" style="left:117.7px;top:736.8px;font-size:18px;font-weight:700;color:#111"><span class="sx" style="transform:scaleX(0.905)">Clientes - Terceros</span></div>
<div class="c" style="left:414px;width:132.5px;top:739.1px;font-size:18px;color:#38383b;letter-spacing:-1.3px"><span>53<svg class="n1" width="4.6" height="13" viewBox="0 0 4.6 13"><path d="M3 0.3V13M3.2 0.5L0.6 2.7" fill="none" stroke="#38383b" stroke-width="1.5"/></svg>,337.82</span></div>
<div class="c" style="left:546.5px;width:126.0px;top:739.1px;font-size:18px;color:#38383b;letter-spacing:-1.3px"><span>0</span></div>
<div class="c" style="left:672.5px;width:127.5px;top:739.1px;font-size:18px;color:#38383b;letter-spacing:-1.3px"><span>0</span></div>
<div class="c" style="left:800px;width:130.5px;top:739.1px;font-size:18px;color:#38383b;letter-spacing:-1.3px"><span>0</span></div>
<div class="c" style="left:930.5px;width:133.5px;top:739.1px;font-size:18px;color:#38383b;letter-spacing:-1.3px"><span>0</span></div>
<div class="c" style="left:1064px;width:132.5px;top:739.1px;font-size:18px;color:#38383b;letter-spacing:-1.3px"><span>0</span></div>
<div class="c" style="left:1196.5px;width:133.0px;top:739.1px;font-size:18px;color:#38383b;letter-spacing:-1.3px"><span>0</span></div>
<div class="c" style="left:1329.5px;width:131.0px;top:739.1px;font-size:18px;color:#38383b;letter-spacing:-1.3px"><span>280,279.53</span></div>
<svg class="a" style="left:96.3px;top:797px" width="11" height="16" viewBox="0 0 11 16"><path d="M0.8 0.8L8.4 7.9L0.8 15" fill="none" stroke="#1b52dc" stroke-width="2.4" stroke-linecap="butt" stroke-linejoin="miter"/></svg>
<div class="t" style="left:117.7px;top:793.8px;font-size:18px;font-weight:700;color:#111"><span class="sx" style="transform:scaleX(0.888)">Clientes - Relacionados (Vinculadas)</span></div>
<div class="c" style="left:414px;width:132.5px;top:796.1px;font-size:18px;color:#38383b;letter-spacing:-1.3px"><span>953,4<svg class="n1" width="4.6" height="13" viewBox="0 0 4.6 13"><path d="M3 0.3V13M3.2 0.5L0.6 2.7" fill="none" stroke="#38383b" stroke-width="1.5"/></svg>7.94</span></div>
<div class="c" style="left:546.5px;width:126.0px;top:796.1px;font-size:18px;color:#38383b;letter-spacing:-1.3px"><span>0</span></div>
<div class="c" style="left:672.5px;width:127.5px;top:796.1px;font-size:18px;color:#38383b;letter-spacing:-1.3px"><span>0</span></div>
<div class="c" style="left:800px;width:130.5px;top:796.1px;font-size:18px;color:#38383b;letter-spacing:-1.3px"><span>0</span></div>
<div class="c" style="left:930.5px;width:133.5px;top:796.1px;font-size:18px;color:#38383b;letter-spacing:-1.3px"><span>0</span></div>
<div class="c" style="left:1064px;width:132.5px;top:796.1px;font-size:18px;color:#38383b;letter-spacing:-1.3px"><span>0</span></div>
<div class="c" style="left:1196.5px;width:133.0px;top:796.1px;font-size:18px;color:#38383b;letter-spacing:-1.3px"><span>0</span></div>
<div class="c" style="left:1329.5px;width:131.0px;top:796.1px;font-size:18px;color:#38383b;letter-spacing:-1.3px"><span>493,387.70</span></div>
<svg class="a" style="left:96.3px;top:855px" width="11" height="16" viewBox="0 0 11 16"><path d="M0.8 0.8L8.4 7.9L0.8 15" fill="none" stroke="#1b52dc" stroke-width="2.4" stroke-linecap="butt" stroke-linejoin="miter"/></svg>
<div class="t" style="left:117.7px;top:851.8px;font-size:18px;font-weight:700;color:#111"><span class="sx" style="transform:scaleX(0.89)">Otros ingresos</span></div>
<div class="c" style="left:414px;width:132.5px;top:854.1px;font-size:18px;color:#38383b;letter-spacing:-1.3px"><span>0</span></div>
<div class="c" style="left:546.5px;width:126.0px;top:854.1px;font-size:18px;color:#38383b;letter-spacing:-1.3px"><span>0</span></div>
<div class="c" style="left:672.5px;width:127.5px;top:854.1px;font-size:18px;color:#38383b;letter-spacing:-1.3px"><span>0</span></div>
<div class="c" style="left:800px;width:130.5px;top:854.1px;font-size:18px;color:#38383b;letter-spacing:-1.3px"><span>0</span></div>
<div class="c" style="left:930.5px;width:133.5px;top:854.1px;font-size:18px;color:#38383b;letter-spacing:-1.3px"><span>0</span></div>
<div class="c" style="left:1064px;width:132.5px;top:854.1px;font-size:18px;color:#38383b;letter-spacing:-1.3px"><span>0</span></div>
<div class="c" style="left:1196.5px;width:133.0px;top:854.1px;font-size:18px;color:#38383b;letter-spacing:-1.3px"><span>0</span></div>
<div class="c" style="left:1329.5px;width:131.0px;top:854.1px;font-size:18px;color:#38383b;letter-spacing:-1.3px"><span>0</span></div>
<svg class="a" style="left:81px;top:912.8px" width="11" height="16" viewBox="0 0 11 16"><path d="M0.8 0.8L8.4 7.9L0.8 15" fill="none" stroke="#1b52dc" stroke-width="2.4" stroke-linecap="butt" stroke-linejoin="miter"/></svg>
<div class="t" style="left:103px;top:908.8px;font-size:18px;font-weight:700;color:#111"><span class="sx" style="transform:scaleX(0.884)">Total Periodo</span></div>
<div class="c" style="left:414px;width:132.5px;top:911.1px;font-size:18px;color:#38383b;letter-spacing:-1.1px"><span>409,982.89</span></div>
<div class="c" style="left:546.5px;width:126.0px;top:911.1px;font-size:18px;color:#38383b;letter-spacing:-1.1px"><span>409,982.89</span></div>
<div class="c" style="left:672.5px;width:127.5px;top:911.1px;font-size:18px;color:#38383b;letter-spacing:-1.1px"><span><svg class="n1" width="4.6" height="13" viewBox="0 0 4.6 13"><path d="M3 0.3V13M3.2 0.5L0.6 2.7" fill="none" stroke="#38383b" stroke-width="1.5"/></svg>,428,422.24</span></div>
<div class="c" style="left:800px;width:130.5px;top:911.1px;font-size:18px;color:#38383b;letter-spacing:-1.1px"><span>2,00<svg class="n1" width="4.6" height="13" viewBox="0 0 4.6 13"><path d="M3 0.3V13M3.2 0.5L0.6 2.7" fill="none" stroke="#38383b" stroke-width="1.5"/></svg>,675.94</span></div>
<div class="c" style="left:930.5px;width:133.5px;top:911.1px;font-size:18px;color:#38383b;letter-spacing:-1.1px"><span>2,975,372.99</span></div>
<div class="c" style="left:1064px;width:132.5px;top:911.1px;font-size:18px;color:#38383b;letter-spacing:-1.1px"><span>2,<svg class="n1" width="4.6" height="13" viewBox="0 0 4.6 13"><path d="M3 0.3V13M3.2 0.5L0.6 2.7" fill="none" stroke="#38383b" stroke-width="1.5"/></svg>90,507.84</span></div>
<div class="c" style="left:1196.5px;width:133.0px;top:911.1px;font-size:18px;color:#38383b;letter-spacing:-1.1px"><span>2,<svg class="n1" width="4.6" height="13" viewBox="0 0 4.6 13"><path d="M3 0.3V13M3.2 0.5L0.6 2.7" fill="none" stroke="#38383b" stroke-width="1.5"/></svg>80,507.84</span></div>
<div class="c" style="left:1329.5px;width:131.0px;top:911.1px;font-size:18px;color:#38383b;letter-spacing:-1.1px"><span>2,<svg class="n1" width="4.6" height="13" viewBox="0 0 4.6 13"><path d="M3 0.3V13M3.2 0.5L0.6 2.7" fill="none" stroke="#38383b" stroke-width="1.5"/></svg>80,967.23</span></div>
<div class="t" style="left:84px;top:962px;font-size:18px;font-weight:700;color:#111"><span class="sx" style="transform:scaleX(0.92)">Total Periodo</span></div>
<div class="c" style="left:414px;width:132.5px;top:963px;font-size:18px;font-weight:700;color:#16784c;letter-spacing:-0.9px"><span>409<i class="pb">,</i>982<i class="pb">.</i>89</span></div>
<div class="c" style="left:546.5px;width:126.0px;top:963px;font-size:18px;font-weight:700;color:#16784c;letter-spacing:-0.9px"><span>409<i class="pb">,</i>982<i class="pb">.</i>89</span></div>
<div class="c" style="left:672.5px;width:127.5px;top:963px;font-size:18px;font-weight:700;color:#16784c;letter-spacing:-0.9px"><span>1<i class="pb">,</i>428<i class="pb">,</i>422<i class="pb">.</i>24</span></div>
<div class="c" style="left:800px;width:130.5px;top:963px;font-size:18px;font-weight:700;color:#16784c;letter-spacing:-0.9px"><span>2<i class="pb">,</i>091<i class="pb">,</i>675<i class="pb">.</i>94</span></div>
<div class="c" style="left:930.5px;width:133.5px;top:963px;font-size:18px;font-weight:700;color:#16784c;letter-spacing:-0.9px"><span>2<i class="pb">,</i>975<i class="pb">,</i>372<i class="pb">.</i>99</span></div>
<div class="c" style="left:1064px;width:132.5px;top:963px;font-size:18px;font-weight:700;color:#16784c;letter-spacing:-0.9px"><span>2<i class="pb">,</i>190<i class="pb">,</i>507<i class="pb">.</i>84</span></div>
<div class="c" style="left:1196.5px;width:133.0px;top:963px;font-size:18px;font-weight:700;color:#16784c;letter-spacing:-0.9px"><span>2<i class="pb">,</i>180<i class="pb">,</i>867<i class="pb">.</i>23</span></div>
<div class="c" style="left:1329.5px;width:131.0px;top:963px;font-size:18px;font-weight:700;color:#16784c;letter-spacing:-0.9px"><span>2<i class="pb">,</i>738<i class="pb">,</i>254<i class="pb">.</i>47</span></div>
<div class="a" style="left:520px;top:443px;width:792px;height:399px;background:#fefefe;border-radius:8px;box-shadow:0 2px 14px rgba(0,0,0,0.10)"></div>
<div class="a" style="left:549px;top:467px;width:734px;height:37px;background:#0b5cff;border-radius:5px"></div>
<div class="a" style="left:663.5px;top:495px;width:619.5px;height:10.5px;background:#0b5cff;border-radius:0 0 5px 0"></div>
<div class="t" style="left:562.5px;top:477.5px;font-size:16px;color:#fff;-webkit-text-stroke:0.2px #fff">Parámetros:</div>
<svg class="a" style="left:679px;top:478.5px" width="17" height="16" viewBox="0 0 17 16"><path d="M2.2 6.2V2.2H6.4M10.6 2.2H14.8V6.2M14.8 9.8V13.8H10.6M6.4 13.8H2.2V9.8" fill="none" stroke="#fff" stroke-width="2.1" stroke-linecap="butt" stroke-linejoin="round"/></svg>
<div class="t" style="left:701px;top:477.5px;font-size:16px;color:#fff;-webkit-text-stroke:0.2px #fff">Guardar escenario</div>
<svg class="a" style="left:856px;top:478px" width="20" height="17" viewBox="0 0 20 17"><path d="M7 2.2L12.2 7.4L7 12.6L1.8 7.4Z" fill="#fff" stroke="#fff" stroke-width="2" stroke-linejoin="round"/><rect x="10.5" y="7" width="7.5" height="8" rx="2.8" fill="#fff" stroke="#0b5cff" stroke-width="0.9"/></svg>
<div class="t" style="left:880.5px;top:477.5px;font-size:16px;color:#fff;-webkit-text-stroke:0.2px #fff"><span class="sx" style="transform:scaleX(0.94)">Guardar E.C.</span></div>
<div class="a" style="left:549px;top:524px;width:261.5px;height:33.5px;border:1px solid #dcdcde;border-radius:5px;background:#fdfdfe"></div>
<div class="a" style="left:549px;top:524px;width:59px;height:33.5px;background:#0b5cff;border-radius:5px 0 0 5px"></div>
<div class="a" style="left:707.5px;top:524px;width:1px;height:33.5px;background:#dcdcde"></div>
<div class="t" style="left:565.5px;top:533px;font-size:14.5px;color:#fff">Real</div>
<div class="t" style="left:621px;top:533px;font-size:14px;color:#222">Proyectado</div>
<div class="t" style="left:723.5px;top:533px;font-size:14px;color:#222">Combinado</div>
<div class="t" style="left:548.5px;top:578.5px;font-size:11.3px;color:#222">Escenario:</div>
<div class="t" style="left:924px;top:578.5px;font-size:11.3px;color:#222">Rango de fecha:</div>
<div class="t" style="left:548.5px;top:650px;font-size:11.3px;color:#222">Etiqueta:</div>
<div class="t" style="left:923.5px;top:650px;font-size:11.3px;color:#222">Sociedad:</div>
<div class="t" style="left:736.5px;top:712px;font-size:12px;color:#222">Ectructura financiore:</div>
<div class="a" style="left:549px;top:595px;width:359px;height:31.5px;border:1px solid #bdbdc0;border-radius:4px;background:#fefefe"></div>
<div class="a" style="left:861px;top:595px;width:47px;height:31.5px;background:#0b5cff;border-radius:0 4px 4px 0"></div>
<div class="t" style="left:564px;top:603.5px;font-size:12.5px;color:#333">Seleccione un tipo de escenario</div>
<div class="a" style="left:924px;top:595px;width:358px;height:31.5px;border:1px solid #bdbdc0;border-radius:4px;background:#fefefe"></div>
<div class="a" style="left:1235px;top:595px;width:47px;height:31.5px;background:#0b5cff;border-radius:0 4px 4px 0"></div>
<div class="t" style="left:936.5px;top:604.5px;font-size:14px;color:#222">01/11/25 - 07/11/25</div>
<svg class="a" style="left:874px;top:602.5px" width="19" height="16" viewBox="0 0 19 16"><path d="M9.5 2Q11 2 12.3 4.5L16.8 11.5Q18 14 15.5 14H3.5Q1 14 2.2 11.5L6.7 4.5Q8 2 9.5 2Z" fill="#fff" stroke="#fff" stroke-width="1.5"/><path d="M9 4.5L13 12M5.5 12.5Q7 10.5 8.5 10" fill="none" stroke="#24408a" stroke-width="1.2" stroke-linecap="round"/></svg>
<svg class="a" style="left:1250px;top:602.5px" width="18" height="16" viewBox="0 0 18 16"><circle cx="9" cy="5.8" r="4" fill="#fff"/><circle cx="4.8" cy="10.6" r="3.8" fill="#fff"/><circle cx="13.2" cy="10.6" r="3.8" fill="#fff"/><path d="M8.5 4L12.5 12M5 12.5Q6.5 11 8 10.5" fill="none" stroke="#24408a" stroke-width="1.2" stroke-linecap="round"/></svg>
<div class="a" style="left:549px;top:665.5px;width:358px;height:33.0px;border:1px solid #b9b9bc;border-radius:5px;background:#fdfdfe"></div>
<div class="t" style="left:564px;top:675.5px;font-size:12.8px;color:#333">Seleccione etiqueta</div>
<svg class="a" style="left:880px;top:680px" width="11.5" height="6" viewBox="0 0 11.5 6"><path d="M0 0H11.5L5.75 6Z" fill="#4a5d82"/></svg>
<div class="a" style="left:924px;top:666px;width:358px;height:33.5px;border:1px solid #b9b9bc;border-radius:5px;background:#fdfdfe"></div>
<div class="t" style="left:935.5px;top:676.5px;font-size:12.8px;color:#333">Seleccione Sociedad</div>
<svg class="a" style="left:1254px;top:680.5px" width="11.5" height="6.0" viewBox="0 0 11.5 6.0"><path d="M0 0H11.5L5.75 6.0Z" fill="#4a5d82"/></svg>
<div class="a" style="left:736.5px;top:728.5px;width:336.5px;height:32.5px;border:1px solid #b9b9bc;border-radius:5px;background:#fdfdfe"></div>
<div class="t" style="left:747px;top:739px;font-size:13.2px;color:#222"><span class='sx' style='transform:scaleX(0.88)'>ESTRUCTURA GRUPO ABC</span></div>
<svg class="a" style="left:1047px;top:742px" width="11.5" height="6" viewBox="0 0 11.5 6"><path d="M0 0H11.5L5.75 6Z" fill="#4a5d82"/></svg>
<div class="a" style="left:672px;top:778px;width:252px;height:37.5px;background:#5571a1;border-radius:5px"></div>
<div class="t" style="left:777.5px;top:789px;font-size:17px;color:#fff;-webkit-text-stroke:0.25px #fff">Filtros</div>
<div class="a" style="left:935px;top:778px;width:252.5px;height:37.5px;background:#0b5cff;border-radius:5px;box-shadow:0 1px 3px rgba(0,0,0,0.12)"></div>
<div class="t" style="left:1038px;top:788.5px;font-size:16.7px;color:#fff;-webkit-text-stroke:0.25px #fff">Aplicar</div>
</body></html>
